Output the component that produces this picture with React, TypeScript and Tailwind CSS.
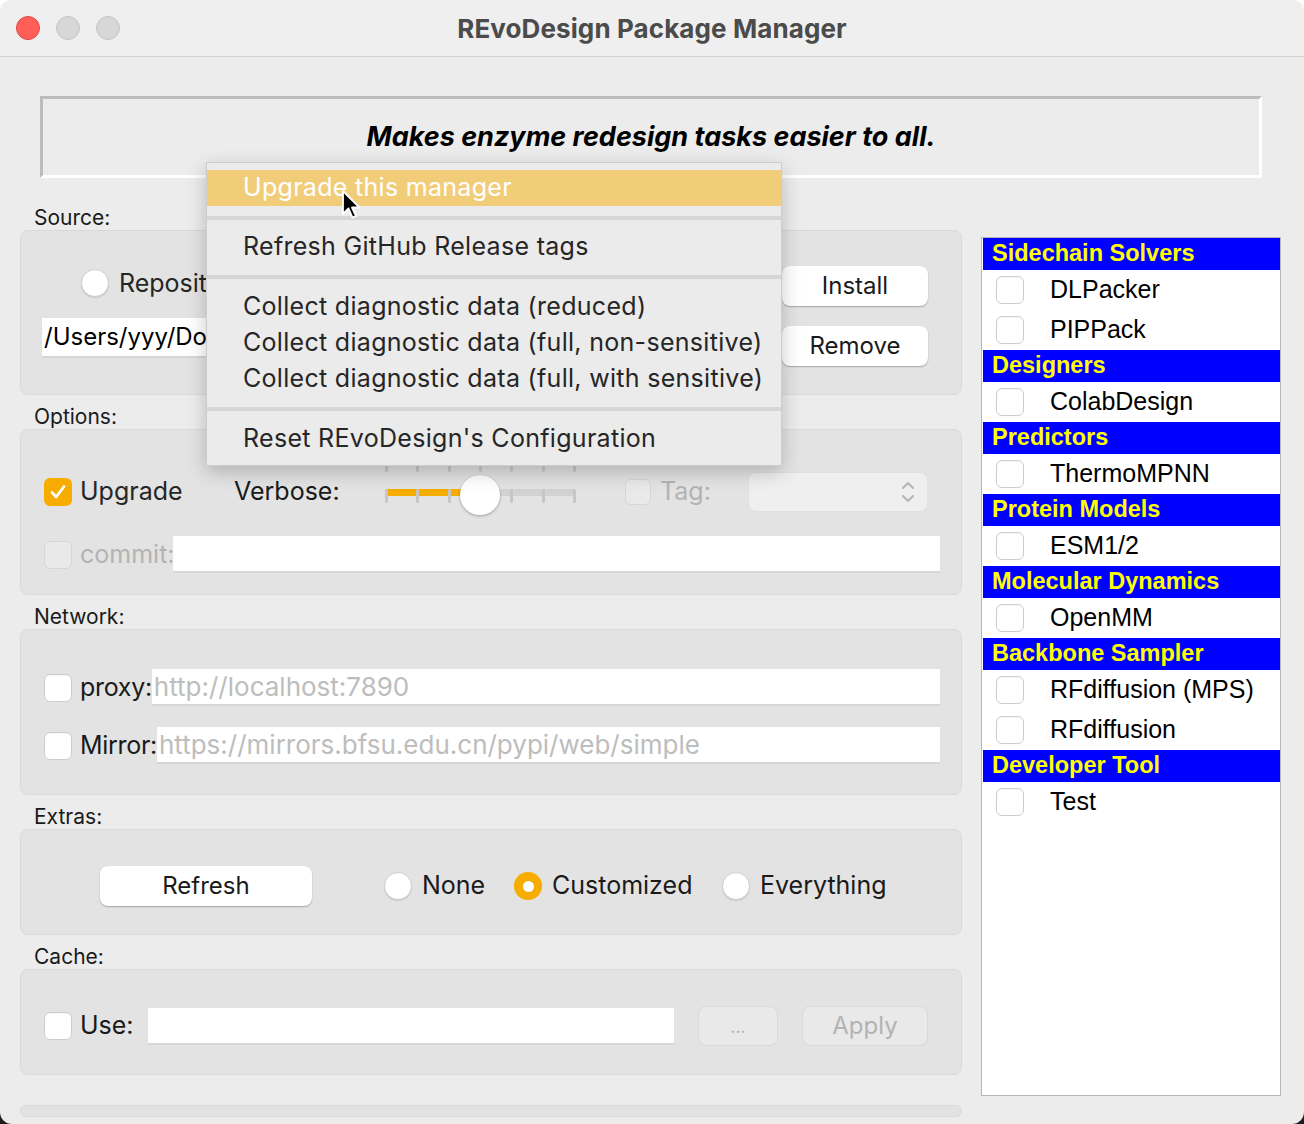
import type { ReactNode } from "react";

const ui = "font-['Inter','Liberation_Sans',sans-serif]";
const list = "font-['Liberation_Sans','Arial',sans-serif]";

function Check({ on = false, off = false, size = "w-[28px] h-[28px]" }: { on?: boolean; off?: boolean; size?: string }) {
  if (on) {
    return (
      <div className={`${size} shrink-0 rounded-[6px] bg-[#f7ac00] flex items-center justify-center`}>
        <svg width="20" height="20" viewBox="0 0 20 20">
          <path d="M4 10.5 L8.2 15 L16 4.5" fill="none" stroke="#fff" strokeWidth="2.8" strokeLinecap="round" strokeLinejoin="round" />
        </svg>
      </div>
    );
  }
  return (
    <div
      className={`${size} shrink-0 rounded-[6px] border ${
        off ? "bg-[#e9e9e9] border-[#d6d6d6]" : "bg-white border-[#cdcdcd] shadow-[inset_0_1px_1px_rgba(0,0,0,0.04)]"
      }`}
    />
  );
}

function Radio({ on = false }: { on?: boolean }) {
  if (on) {
    return (
      <div className="w-[28px] h-[28px] shrink-0 rounded-full bg-[#f7ac00] flex items-center justify-center">
        <div className="w-[11px] h-[11px] rounded-full bg-white" />
      </div>
    );
  }
  return <div className="w-[28px] h-[28px] shrink-0 rounded-full bg-white border border-[#cfcfcf] shadow-[0_1px_1px_rgba(0,0,0,0.12)]" />;
}

function Btn({ children, w, off = false }: { children: ReactNode; w: string; off?: boolean }) {
  return (
    <div
      className={`${w} h-[40px] shrink-0 rounded-[8px] flex items-center justify-center text-[24px] ${
        off
          ? "bg-[#e9e9e9] border border-[#d9d9d9] text-[#b3b3b3]"
          : "bg-white text-[#1a1a1a] shadow-[0_1px_1.5px_rgba(0,0,0,0.28)]"
      }`}
    >
      {children}
    </div>
  );
}

function Field({ w, h = "h-[37px]", size = "text-[26px]", text, ph }: { w: string; h?: string; size?: string; text?: string; ph?: string }) {
  return (
    <div className={`${w} ${h} ${size} min-w-0 bg-white border-b-[2px] border-[#d6d6d6] flex items-center pl-[2px] overflow-hidden whitespace-nowrap`}>
      {text && <span className="text-black">{text}</span>}
      {ph && <span className="text-[#bdbdbd]">{ph}</span>}
    </div>
  );
}

function Section({ label, first = false, h, children }: { label: string; first?: boolean; h: string; children: ReactNode }) {
  return (
    <div>
      <div className={`${first ? "h-[35px]" : "h-[34px]"} pl-[14px] flex items-end pb-[1px] text-[21px] text-[#1a1a1a] leading-[22px]`}>{label}</div>
      <div className={`${h} rounded-[8px] bg-[#e3e3e3] border border-[#d9d9d9]`}>{children}</div>
    </div>
  );
}

const groups: { title: string; items: string[] }[] = [
  { title: "Sidechain Solvers", items: ["DLPacker", "PIPPack"] },
  { title: "Designers", items: ["ColabDesign"] },
  { title: "Predictors", items: ["ThermoMPNN"] },
  { title: "Protein Models", items: ["ESM1/2"] },
  { title: "Molecular Dynamics", items: ["OpenMM"] },
  { title: "Backbone Sampler", items: ["RFdiffusion (MPS)", "RFdiffusion"] },
  { title: "Developer Tool", items: ["Test"] },
];

export default function App() {
  return (
    <div className={`w-[1304px] h-[1124px] bg-[linear-gradient(#ffffff_50%,#1c1c1c_50%)] ${ui}`}>
      <div className="relative w-full h-full rounded-[12px] overflow-hidden bg-[#ececec] flex flex-col">
        {/* title bar */}
        <div className="h-[57px] shrink-0 bg-[#efefef] border-b border-[#d3d3d3] grid grid-cols-[1fr_auto_1fr] items-center">
          <div className="flex items-center gap-[16px] pl-[16px]">
            <div className="w-[24px] h-[24px] rounded-full bg-[#ff5f57] border border-[#e2463f]" />
            <div className="w-[24px] h-[24px] rounded-full bg-[#d7d7d7] border border-[#c3c3c3]" />
            <div className="w-[24px] h-[24px] rounded-full bg-[#d7d7d7] border border-[#c3c3c3]" />
          </div>
          <div className="text-[26px] font-bold text-[#4b4b4b] tracking-[0.1px]">REvoDesign Package Manager</div>
          <div />
        </div>

        {/* banner */}
        <div className="mt-[39px] ml-[40px] w-[1222px] h-[82px] shrink-0 border-[3px] border-t-[#bcbcbc] border-l-[#bcbcbc] border-b-white border-r-white flex items-center justify-center">
          <span className="text-[27px] font-bold italic text-black">Makes enzyme redesign tasks easier to all.</span>
        </div>

        <div className="flex mt-[17px]">
          {/* left column */}
          <div className="ml-[20px] w-[942px] flex flex-col">
            <Section label="Source:" first h="h-[165px]">
              <div className="flex h-full">
                {/* the part under the popup menu is cut at the menu's edge */}
                <div className="w-[185px] pl-[21px] overflow-hidden">
                  <div className="mt-[38px] ml-[39px] flex items-center gap-[10px] text-[25px] leading-[28px] text-[#262626] whitespace-nowrap">
                    <Radio />
                    <span>Reposit</span>
                  </div>
                  <div className="mt-[21px]">
                    <Field w="w-[164px]" h="h-[40px]" size="text-[24px]" text="/Users/yyy/Do" />
                  </div>
                </div>
                <div className="flex-1" />
                <div className="w-[146px] mr-[33px] pt-[35px] flex flex-col gap-[20px]">
                  <Btn w="w-[146px]">Install</Btn>
                  <Btn w="w-[146px]">Remove</Btn>
                </div>
              </div>
            </Section>

            <Section label="Options:" h="h-[166px]">
              <div className="pl-[23px] pt-[42px]">
                <div className="flex items-center h-[40px] text-[25px]">
                  <Check on />
                  <span className="ml-[8px] w-[154px] text-[#262626]">Upgrade</span>
                  <span className="w-[151px] text-[#1a1a1a]">Verbose:</span>
                  <div className="w-[191px] h-[40px] flex flex-col justify-center">
                    <div className="w-full h-[7px] rounded-full bg-[#d2d2d2] flex">
                      <div className="w-[95px] h-full rounded-l-full bg-[#f7ac00]" />
                    </div>
                  </div>
                  <div className="ml-[49px]">
                    <Check off size="w-[26px] h-[26px]" />
                  </div>
                  <span className="ml-[9px] w-[88px] text-[#b3b3b3]">Tag:</span>
                  <div className="w-[180px] h-[40px] rounded-[8px] bg-[#efefef] border border-[#e0e0e0] flex items-center justify-end pr-[12px]">
                    <svg width="14" height="24" viewBox="0 0 14 24">
                      <path d="M2 8 L7 3 L12 8 M2 16 L7 21 L12 16" fill="none" stroke="#b5b5b5" strokeWidth="2" strokeLinecap="round" strokeLinejoin="round" />
                    </svg>
                  </div>
                </div>
                <div className="mt-[24px] flex items-center h-[37px] text-[25px]">
                  <Check off />
                  <span className="ml-[8px] w-[93px] text-[#b3b3b3]">commit:</span>
                  <Field w="w-[767px]" />
                </div>
              </div>
            </Section>

            <Section label="Network:" h="h-[166px]">
              <div className="pl-[23px] pt-[39px] pr-[21px] flex flex-col gap-[21px] text-[25px] text-[#1a1a1a]">
                <div className="flex items-center h-[37px]">
                  <Check />
                  <span className="ml-[8px] shrink-0 tracking-[-0.3px]">proxy:</span>
                  <Field w="flex-1" ph="http://localhost:7890" />
                </div>
                <div className="flex items-center h-[37px]">
                  <Check />
                  <span className="ml-[8px] shrink-0 tracking-[-0.3px]">Mirror:</span>
                  <Field w="flex-1" ph="https://mirrors.bfsu.edu.cn/pypi/web/simple" />
                </div>
              </div>
            </Section>

            <Section label="Extras:" h="h-[106px]">
              <div className="pl-[79px] pt-[36px] flex items-center h-[76px] text-[25px] text-[#1a1a1a]">
                <Btn w="w-[212px]">Refresh</Btn>
                <div className="ml-[72px] w-[130px] flex items-center gap-[10px]">
                  <Radio />
                  <span>None</span>
                </div>
                <div className="w-[208px] flex items-center gap-[10px]">
                  <Radio on />
                  <span>Customized</span>
                </div>
                <div className="flex items-center gap-[10px]">
                  <Radio />
                  <span>Everything</span>
                </div>
              </div>
            </Section>

            <Section label="Cache:" h="h-[106px]">
              <div className="pl-[23px] pt-[36px] h-[76px] flex items-center text-[25px] text-[#1a1a1a]">
                <Check />
                <span className="ml-[8px] w-[68px]">Use:</span>
                <Field w="w-[526px]" />
                <div className="ml-[24px]">
                  <Btn w="w-[80px]" off>
                    <span className="text-[18px]">...</span>
                  </Btn>
                </div>
                <div className="ml-[24px]">
                  <Btn w="w-[126px]" off>Apply</Btn>
                </div>
              </div>
            </Section>

            <div className="mt-[30px] h-[12px] rounded-full bg-[#e2e2e2] border border-[#d9d9d9]" />
          </div>

          {/* right list */}
          <div className={`ml-[19px] mt-[42px] w-[300px] h-[859px] bg-white border border-[#b7b7b7] pl-[1px] ${list}`}>
            {groups.map((g) => (
              <div key={g.title}>
                <div className="h-[32px] bg-[#0000ff] text-[#ffff00] font-bold text-[23.5px] pl-[9px] flex items-center">{g.title}</div>
                {g.items.map((it) => (
                  <div key={it} className="h-[40px] flex items-center text-[25px] text-black">
                    <div className="ml-[13px]">
                      <Check />
                    </div>
                    <span className="ml-[26px]">{it}</span>
                  </div>
                ))}
              </div>
            ))}
          </div>
        </div>

        {/* slider ticks + thumb (drawn over the track) */}
        <div className="absolute left-[385px] top-[460px] w-[191px] h-[46px] pointer-events-none">
          <div className="flex justify-between h-[14px]">
            {[0, 1, 2, 3, 4, 5, 6].map((i) => (
              <div key={i} className="w-[3px] h-[12px] rounded-full bg-[#cacaca]" />
            ))}
          </div>
          <div className="flex justify-between mt-[15px]">
            {[0, 1, 2, 3, 4, 5, 6].map((i) => (
              <div key={i} className="w-[3px] h-[14px] rounded-full bg-[#c6c6c6]" />
            ))}
          </div>
        </div>
        <div className="absolute left-[460px] top-[475px] w-[40px] h-[40px] rounded-full bg-white shadow-[0_1px_3px_rgba(0,0,0,0.3)]" />

        {/* context menu */}
        <div className="absolute left-[206px] top-[162px] w-[576px] h-[304px] bg-[#ebebeb] border border-[#cdcdcd] shadow-[0_6px_18px_rgba(0,0,0,0.22)] pt-[7px] text-[25px] tracking-[0.3px] text-[#262626]">
          <div className="h-[36px] bg-[#f2cd79] text-white flex items-center pl-[36px]">Upgrade this manager</div>
          <div className="h-[23px] flex items-center">
            <div className="w-full h-[4px] bg-[#d6d6d6]" />
          </div>
          <div className="h-[36px] flex items-center pl-[36px]">Refresh GitHub Release tags</div>
          <div className="h-[24px] flex items-center">
            <div className="w-full h-[4px] bg-[#d6d6d6]" />
          </div>
          <div className="h-[36px] flex items-center pl-[36px]">Collect diagnostic data (reduced)</div>
          <div className="h-[36px] flex items-center pl-[36px]">Collect diagnostic data (full, non-sensitive)</div>
          <div className="h-[36px] flex items-center pl-[36px]">Collect diagnostic data (full, with sensitive)</div>
          <div className="h-[24px] flex items-center">
            <div className="w-full h-[4px] bg-[#d6d6d6]" />
          </div>
          <div className="h-[36px] flex items-center pl-[36px]">Reset REvoDesign's Configuration</div>
        </div>

        {/* mouse cursor */}
        <svg className="absolute left-[341px] top-[189px]" width="24" height="34" viewBox="0 0 24 34">
          <path d="M2 2 L2 25 L7.5 19.5 L11.5 28.5 L15 27 L11 18.5 L18.5 18.5 Z" fill="#000" stroke="#fff" strokeWidth="1.8" strokeLinejoin="round" />
        </svg>
      </div>
    </div>
  );
}
